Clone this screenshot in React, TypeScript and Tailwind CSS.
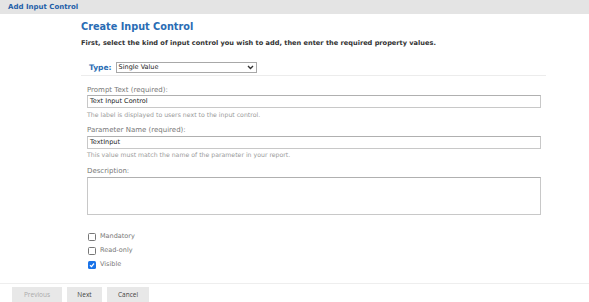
export default function App() {
  const font = { fontFamily: '"DejaVu Sans", Verdana, sans-serif' };
  const btn = { fontFamily: '"Open Sans", sans-serif' };
  return (
    <div className="w-[589px] h-[302px] bg-white flex flex-col overflow-hidden" style={font}>
      <div className="h-[14px] bg-[#e4e4e4] pl-[8px] flex items-center text-[7px] font-bold text-[#1f5ea8]">
        Add Input Control
      </div>
      <div className="flex-1 pl-[81px] pr-[43px]">
        <h1
          className="mt-[6px] text-[10.8px] font-bold text-[#2a6cb4] leading-[14px]"
          style={{ fontFamily: '"DejaVu Sans Condensed", "DejaVu Sans", sans-serif', fontStretch: "condensed" }}
        >
          Create Input Control
        </h1>
        <p className="mt-[5px] text-[6.6px] font-bold text-[#333] leading-[9px]">
          First, select the kind of input control you wish to add, then enter the required property values.
        </p>
        <div className="mt-[14px] pl-[8px] flex items-center h-[11px]">
          <span className="text-[7.5px] font-bold text-[#2a6cb4] mr-[4px]">Type:</span>
          <div className="w-[141px] h-[11px] border border-[#a8a8a8] flex items-center justify-between px-[2px] text-[6.5px] text-[#222]">
            <span>Single Value</span>
            <svg width="7" height="5" viewBox="0 0 7 5"><path d="M1 1 L3.5 3.5 L6 1" stroke="#333" strokeWidth="1.4" fill="none" /></svg>
          </div>
        </div>
        <div className="mt-[2px] h-px bg-[#ececec]" />
        <div className="pl-[6px] pr-[5px]">
          <div className="mt-[10px] text-[7px] text-[#777] leading-[9px]">Prompt Text (required):</div>
          <div className="mt-0 h-[13px] border border-[#c8c8c8] border-t-[#b0b0b0] flex items-center px-[2px] text-[6.5px] text-[#222]">Text Input Control</div>
          <div className="mt-[3px] text-[6.2px] text-[#9a9a9a] leading-[8px]">The label is displayed to users next to the input control.</div>
          <div className="mt-[7px] text-[7px] text-[#777] leading-[9px]">Parameter Name (required):</div>
          <div className="mt-[1px] h-[13px] border border-[#c8c8c8] border-t-[#b0b0b0] flex items-center px-[2px] text-[6.5px] text-[#222]">TextInput</div>
          <div className="mt-[2px] text-[6.2px] text-[#9a9a9a] leading-[8px]">This value must match the name of the parameter in your report.</div>
          <div className="mt-[8px] text-[7px] text-[#777] leading-[9px]">Description:</div>
          <div className="mt-[1px] h-[38px] border border-[#c8c8c8] border-t-[#b0b0b0]" />
          <div className="mt-[17px] flex flex-col gap-[5px] pl-[1px]">
            {[
              ["Mandatory", false],
              ["Read-only", false],
              ["Visible", true],
            ].map(([label, checked]) => (
              <div key={label as string} className="flex items-center h-[9px] gap-[4px]">
                {checked ? (
                  <div className="w-[8px] h-[8px] rounded-[1.5px] bg-[#1a73e8] flex items-center justify-center">
                    <svg width="6" height="6" viewBox="0 0 6 6"><path d="M1 3.2 L2.5 4.6 L5 1.5" stroke="white" strokeWidth="1.2" fill="none" /></svg>
                  </div>
                ) : (
                  <div className="w-[8px] h-[8px] rounded-[1.5px] border border-[#777]" />
                )}
                <span className="text-[6.5px] text-[#777]">{label as string}</span>
              </div>
            ))}
          </div>
        </div>
      </div>
      <div className="h-px bg-[#eeeeee]" />
      <div className="h-[18px] flex items-start gap-[5px] pl-[12px] pt-[3px]">
        <div className="w-[50px] h-[15px] bg-[#e8e8e8] flex items-center justify-center text-[6.5px] text-[#aaa]" style={btn}>Previous</div>
        <div className="w-[35px] h-[15px] bg-[#e8e8e8] flex items-center justify-center text-[6.5px] text-[#444]" style={btn}>Next</div>
        <div className="w-[42px] h-[15px] bg-[#e8e8e8] flex items-center justify-center text-[6.5px] text-[#444]" style={btn}>Cancel</div>
      </div>
    </div>
  );
}
